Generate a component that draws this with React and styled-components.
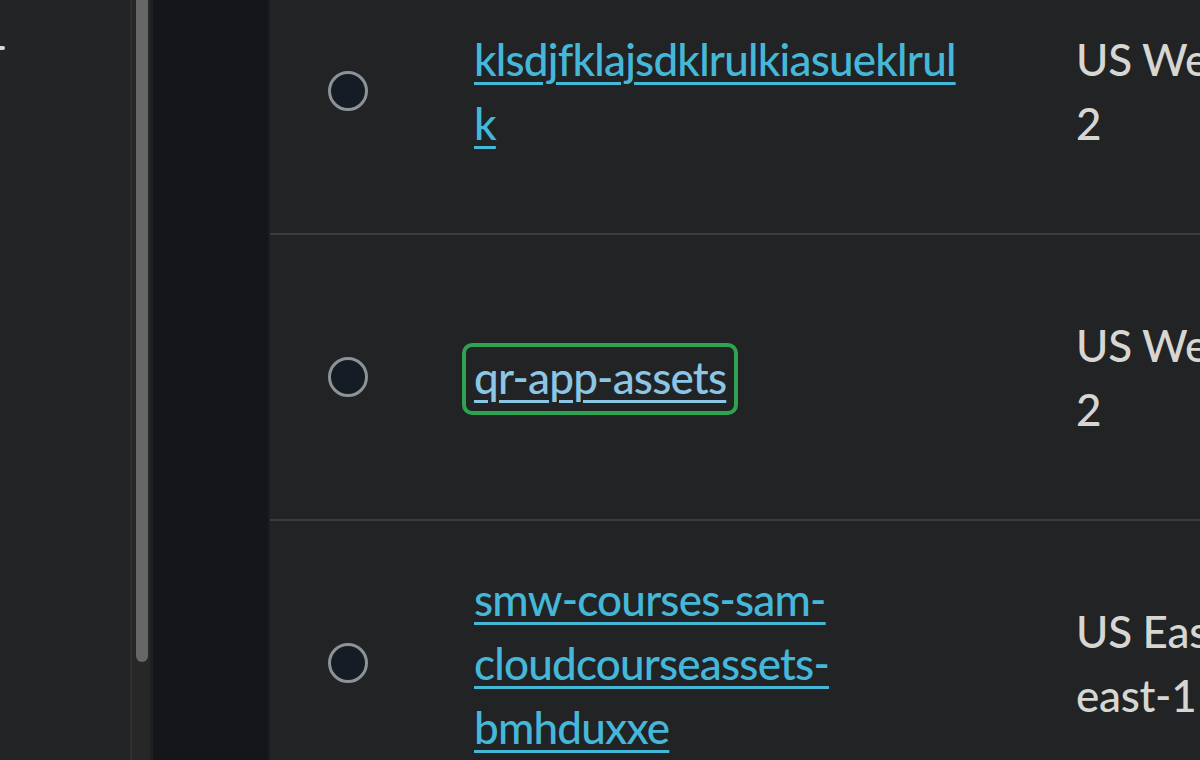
import React from 'react';
import styled, { createGlobalStyle } from 'styled-components';

const GlobalStyle = createGlobalStyle`
  html, body {
    margin: 0;
    padding: 0;
    background: #15161a;
    overflow: hidden;
  }
  body {
    font-family: Lato, "Open Sans", "Liberation Sans", sans-serif;
  }
`;

const Page = styled.div`
  display: flex;
  width: 1200px;
  height: 760px;
  overflow: hidden;
`;

const Sidebar = styled.nav`
  flex: 0 0 130px;
  background: #232426;
  padding-top: 46px;
  box-sizing: border-box;
`;

// right end of a nav label that is cut off by the viewport edge
const CutMark = styled.span`
  display: block;
  width: 5px;
  height: 4px;
  background: #d8d8d4;
  border-radius: 0 2px 2px 0;
`;

const ScrollTrack = styled.div`
  flex: 0 0 auto;
  background: #272727;
  border-left: 2px solid #2f3030;
  border-right: 3px solid #1e1f21;
  padding: 0 2px 0 4px;
`;

const ScrollThumb = styled.div`
  width: 12px;
  height: 662px;
  background: #676767;
  border-radius: 0 0 6px 6px;
`;

const Gutter = styled.div`
  flex: 0 0 115px;
  background: #15161a;
  border-right: 2px solid #1b1c1f;
`;

const Main = styled.main`
  flex: 1;
  background: #222325;
  overflow: hidden;
`;

const Table = styled.div`
  margin-top: -51px;
`;

const Row = styled.div`
  display: grid;
  grid-template-columns: 156px 604px 1fr;
  align-items: center;
  min-height: 284px;
  border-bottom: 2px solid #3a3d42;
  font-size: 44px;
  font-weight: 500;
  line-height: 64px;
`;

const RadioCell = styled.div`
  padding-left: 58px;
`;

const Radio = styled.span`
  display: block;
  width: 34px;
  height: 34px;
  border-radius: 50%;
  border: 3px solid #8c9397;
  background: #161c25;
`;

const NameCell = styled.div`
  padding: 0 66px 0 48px;
  overflow-wrap: anywhere;
  letter-spacing: -0.8px;
`;

const BucketLink = styled.a`
  position: relative;
  color: ${p => (p.$focused ? '#8cc6e6' : '#45b8da')};
  text-decoration: underline;
  text-decoration-thickness: 3px;
  text-underline-offset: 6px;
  cursor: pointer;

  ${p => p.$focused && `
    display: inline-block;
    &::after {
      content: '';
      position: absolute;
      top: -2px;
      bottom: -6px;
      left: -12px;
      right: -12px;
      border: 4px solid #2ea352;
      border-radius: 10px;
    }
  `}
`;

const RegionCell = styled.div`
  padding-left: 46px;
  color: #d6d6d2;
  white-space: nowrap;
  letter-spacing: -0.3px;
`;

const buckets = [
  { name: 'klsdjfklajsdklrulkiasueklrulk', region: ['US West (Oregon) us-west-', '2'] },
  { name: 'qr-app-assets', region: ['US West (Oregon) us-west-', '2'], focused: true },
  { name: 'smw-courses-sam-cloudcourseassets-bmhduxxe', region: ['US East (N. Virginia) us-', 'east-1'] },
];

const App = () => (
  <>
    <GlobalStyle />
    <Page>
      <Sidebar>
        <CutMark />
      </Sidebar>
      <ScrollTrack>
        <ScrollThumb />
      </ScrollTrack>
      <Gutter />
      <Main>
        <Table>
          {buckets.map(b => (
            <Row key={b.name}>
              <RadioCell>
                <Radio />
              </RadioCell>
              <NameCell>
                <BucketLink $focused={b.focused}>{b.name}</BucketLink>
              </NameCell>
              <RegionCell>
                {b.region.map(line => (
                  <div key={line}>{line}</div>
                ))}
              </RegionCell>
            </Row>
          ))}
        </Table>
      </Main>
    </Page>
  </>
);

export default App;
